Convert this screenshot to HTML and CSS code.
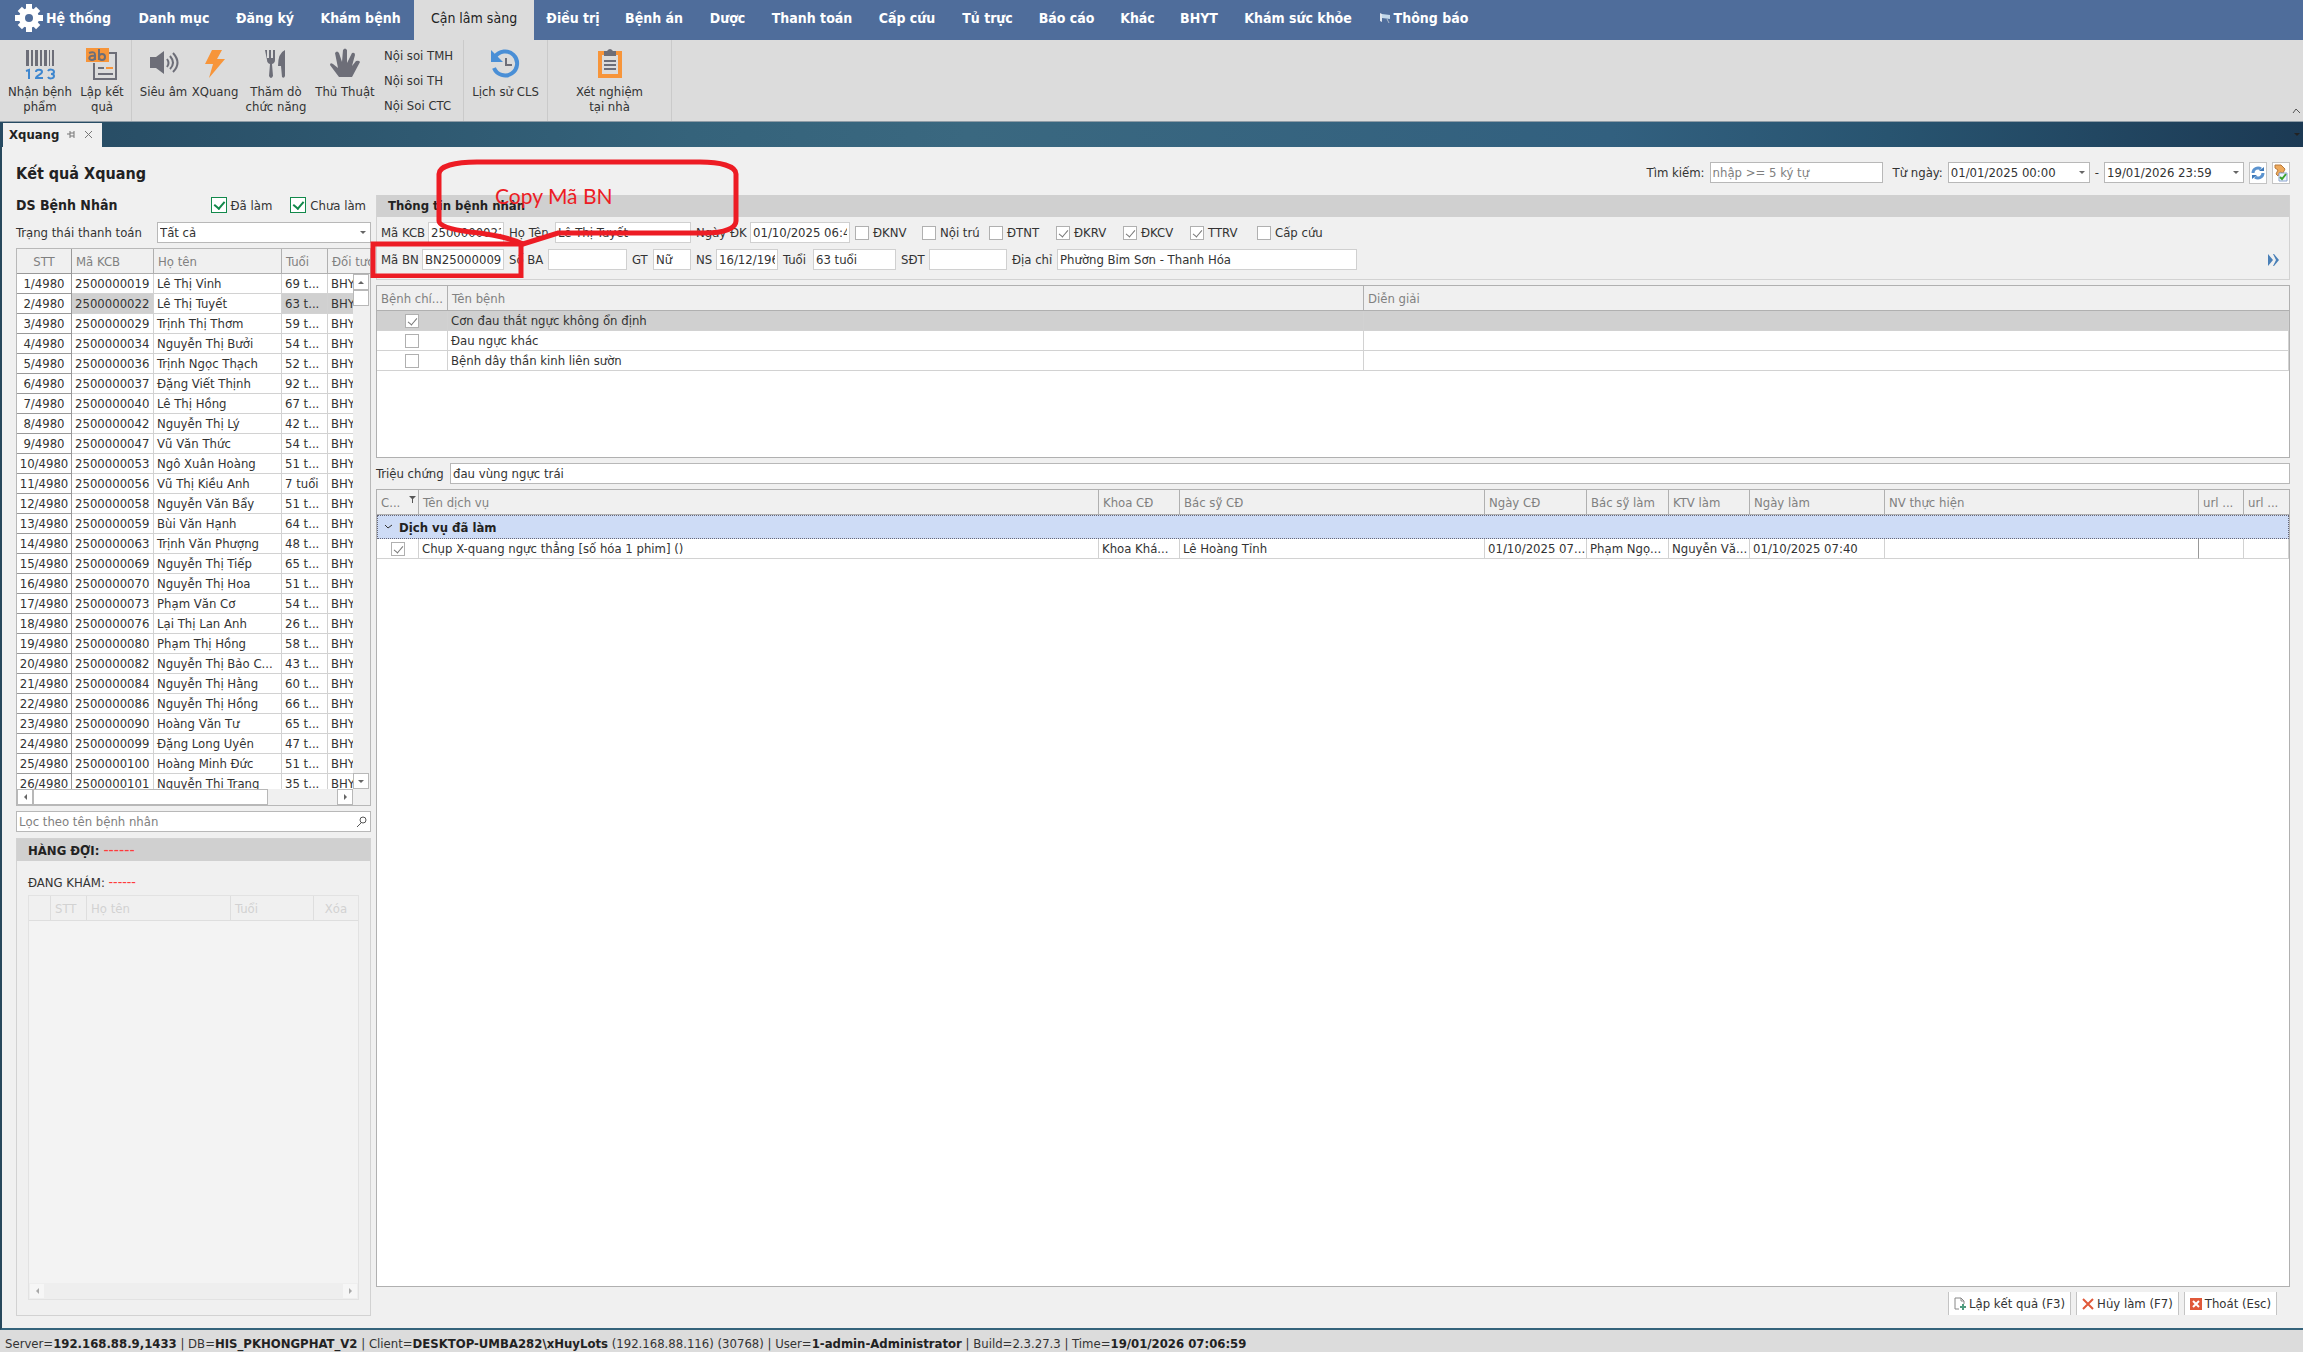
FILE: index.html
```html
<!DOCTYPE html>
<html lang="vi">
<head>
<meta charset="utf-8">
<title>Kết quả Xquang</title>
<link rel="stylesheet" href="styles.css">
</head>
<body>
<nav class="menu">
  <a href="#" class="home"><svg width="30" height="30" viewBox="0 0 30 30"><g fill="#fff"><circle cx="15" cy="15" r="10"/><rect x="12" y="1" width="6" height="28"/><rect x="1" y="12" width="28" height="6"/><rect x="12" y="2" width="6" height="26" transform="rotate(45 15 15)"/><rect x="12" y="2" width="6" height="26" transform="rotate(-45 15 15)"/></g><circle cx="15" cy="15" r="4" fill="#4f6d9b"/></svg>Hệ thống</a>
  <a href="#">Danh mục</a>
  <a href="#">Đăng ký</a>
  <a href="#">Khám bệnh</a>
  <a href="#" class="active">Cận lâm sàng</a>
  <a href="#">Điều trị</a>
  <a href="#">Bệnh án</a>
  <a href="#">Dược</a>
  <a href="#">Thanh toán</a>
  <a href="#">Cấp cứu</a>
  <a href="#">Tủ trực</a>
  <a href="#">Báo cáo</a>
  <a href="#">Khác</a>
  <a href="#">BHYT</a>
  <a href="#">Khám sức khỏe</a>
  <a href="#"><svg width="13" height="13" viewBox="0 0 13 13"><path d="M1 1l2 1v8l-2-1z" fill="#dfe6ee"/><path d="M3 2l8 1v4L3 6z" fill="#c3d8ea"/><path d="M8 7l2 4" stroke="#aab8c8"/></svg>Thông báo</a>
</nav>

<header class="ribbon">
  <div class="group g1">
    <button><svg width="30" height="32" viewBox="0 0 30 32"><path d="M1 2h3v16H1zM6 2h2v16H6zM10 2h3v16h-3zM15 2h2v16h-2zM19 2h3v16h-3zM24 2h1v16h-1zM27 2h2v16h-2z" fill="#6d6e78"/><g fill="none" stroke="#3f87cf" stroke-width="2"><path d="M1 23l3-1v9M11 24c0-3 6-3 6 0 0 2-6 4-6 6h7M23 23c1-2 6-2 6 1 0 1-1 2-3 2 2 0 3 1 3 2 0 3-5 3-6 1"/></g></svg><span>Nhận bệnh<br>phẩm</span></button>
    <button><svg width="34" height="34" viewBox="0 0 34 34"><path d="M24 6h7v26H9V16" fill="none" stroke="#6d6e78" stroke-width="2"/><path d="M1 1h23v14H1z" fill="#f7953a"/><g fill="none" stroke="#6d6e78" stroke-width="2"><path d="M4 6c5-2 6 0 6 2v5M10 9c-7-1-7 4-3 4 2 0 3-1 3-3M14 2v11"/><circle cx="17" cy="10" r="3"/></g><path d="M13 21h6M13 27h15" stroke="#6d6e78" stroke-width="2"/><path d="M21 21h7" stroke="#f7953a" stroke-width="2"/></svg><span>Lập kết<br>quả</span></button>
  </div>
  <div class="group g2">
    <button><svg width="30" height="32" viewBox="0 0 30 32"><path d="M1 9h6l8-6v23l-8-6H1z" fill="#6d6e78"/><g fill="none" stroke="#6d6e78" stroke-width="2"><path d="M18 11q3 4 0 8M21 8q6 7 0 13M24 5q9 10 0 19"/></g></svg><span>Siêu âm</span></button>
    <button><svg width="22" height="32" viewBox="0 0 22 32"><path d="M8 2h10l-5 9h8L5 30l4-14H1z" fill="#f7953a"/></svg><span>XQuang</span></button>
    <button><svg width="24" height="32" viewBox="0 0 24 32"><path d="M1 2h2v8h2V2h2v8h2V2h2v10q0 3-3 4l1 12q-2 4-4 0l1-12q-3-1-3-4zM21 2v26q-1 3-3 1l-1-11h-3q0-13 7-16z" fill="#6d6e78"/></svg><span>Thăm dò<br>chức năng</span></button>
    <button><svg width="32" height="32" viewBox="0 0 32 32"><path d="M10 29l-9-12q0-3 3-1l5 4L6 5q2-3 4 0l3 9 1-12q2-3 4 0v13l5-10q3-1 3 2l-3 11 4-5q3-1 4 1l-8 15z" fill="#6d6e78"/></svg><span>Thủ Thuật</span></button>
    <div class="links"><a href="#">Nội soi TMH</a><a href="#">Nội soi TH</a><a href="#">Nội Soi CTC</a></div>
  </div>
  <div class="group g3">
    <button><svg width="32" height="32" viewBox="0 0 32 32"><path d="M5 9a12 12 0 1 1-1 11" fill="none" stroke="#4a8fd6" stroke-width="4"/><path d="M1 2v12h12z" fill="#4a8fd6"/><path d="M16 10v7h6" fill="none" stroke="#6d6e78" stroke-width="2"/></svg><span>Lịch sử CLS</span></button>
  </div>
  <div class="group g4">
    <button><svg width="26" height="32" viewBox="0 0 26 32"><path d="M3 5h20v23H3z" fill="none" stroke="#f7953a" stroke-width="4"/><path d="M7 3h3q3-4 6 0h3v5H7z" fill="#6d6e78"/><path d="M7 13h12M7 17h12M7 21h12" stroke="#6d6e78" stroke-width="2"/></svg><span>Xét nghiệm<br>tại nhà</span></button>
  </div>
  <svg class="collapse" width="9" height="6" viewBox="0 0 9 6"><path d="M1 5l3-4 4 4" fill="none" stroke="#555"/></svg>
</header>

<div class="tabs">
  <div class="tab">Xquang
    <svg width="9" height="9" viewBox="0 0 9 9"><path d="M0 4h3M3 1v7M3 3h4M3 6h4M7 1v7" stroke="#777" fill="none"/></svg>
    <svg width="9" height="9" viewBox="0 0 9 9"><path d="M1 1l7 7M8 1l-7 7" stroke="#777" fill="none"/></svg>
  </div>
  <span class="arrow"></span>
</div>

<main class="page">
  <div class="topbar">
    <h1>Kết quả Xquang</h1>
    <div class="search">
      <label for="q">Tìm kiếm:</label><input id="q" class="q" placeholder="nhập &gt;= 5 ký tự">
      <label for="d1" class="from">Từ ngày:</label><span class="drop d1"><input id="d1" value="01/01/2025 00:00"></span>
      <span>-</span><span class="drop d2"><input aria-label="Đến ngày" value="19/01/2026 23:59"></span>
      <button aria-label="Làm mới"><svg width="14" height="14" viewBox="0 0 14 14"><g fill="none" stroke="#5b93cf" stroke-width="3"><path d="M2 7a5 5 0 0 1 8-4M12 7a5 5 0 0 1-8 4"/></g><path d="M8 5h5V1zM6 9H1v4z" fill="#3d78b8"/></svg></button>
      <button aria-label="Chọn"><svg width="14" height="18" viewBox="0 0 14 18"><path d="M1 1l6 0 4 4-2 4-3-1-2 4-2-2 2-4-3-2z" fill="#eda95c" stroke="#b97a3a"/><path d="M5 9h8v8H5z" fill="#eef4ff" stroke="#8ba4cf"/><path d="M6 13l2 2 4-5" fill="none" stroke="#3aa32e" stroke-width="2"/></svg></button>
    </div>
  </div>

  <div class="columns">
    <aside>
      <div class="aside-head">
        <h2>DS Bệnh Nhân</h2>
        <label class="green"><input type="checkbox" checked>Đã làm</label>
        <label class="green"><input type="checkbox" checked>Chưa làm</label>
      </div>
      <div class="status-row"><label for="pay">Trạng thái thanh toán</label><span class="drop"><select id="pay"><option>Tất cả</option></select></span></div>

      <div class="list">
        <div class="list-body">
          <table class="patients">
            <colgroup><col class="w55"><col class="w82"><col class="w128"><col class="w46"><col></colgroup>
            <thead><tr><th>STT</th><th>Mã KCB</th><th>Họ tên</th><th>Tuổi</th><th>Đối tượng</th></tr></thead>
            <tbody>
            <tr><td>1/4980</td><td>2500000019</td><td>Lê Thị Vinh</td><td>69 t...</td><td>BHYT</td></tr>
            <tr class="sel"><td>2/4980</td><td>2500000022</td><td>Lê Thị Tuyết</td><td>63 t...</td><td>BHYT</td></tr>
            <tr><td>3/4980</td><td>2500000029</td><td>Trịnh Thị Thơm</td><td>59 t...</td><td>BHYT</td></tr>
            <tr><td>4/4980</td><td>2500000034</td><td>Nguyễn Thị Bưởi</td><td>54 t...</td><td>BHYT</td></tr>
            <tr><td>5/4980</td><td>2500000036</td><td>Trịnh Ngọc Thạch</td><td>52 t...</td><td>BHYT</td></tr>
            <tr><td>6/4980</td><td>2500000037</td><td>Đặng Viết Thịnh</td><td>92 t...</td><td>BHYT</td></tr>
            <tr><td>7/4980</td><td>2500000040</td><td>Lê Thị Hồng</td><td>67 t...</td><td>BHYT</td></tr>
            <tr><td>8/4980</td><td>2500000042</td><td>Nguyễn Thị Lý</td><td>42 t...</td><td>BHYT</td></tr>
            <tr><td>9/4980</td><td>2500000047</td><td>Vũ Văn Thức</td><td>54 t...</td><td>BHYT</td></tr>
            <tr><td>10/4980</td><td>2500000053</td><td>Ngô Xuân Hoàng</td><td>51 t...</td><td>BHYT</td></tr>
            <tr><td>11/4980</td><td>2500000056</td><td>Vũ Thị Kiều Anh</td><td>7 tuổi</td><td>BHYT</td></tr>
            <tr><td>12/4980</td><td>2500000058</td><td>Nguyễn Văn Bẩy</td><td>51 t...</td><td>BHYT</td></tr>
            <tr><td>13/4980</td><td>2500000059</td><td>Bùi Văn Hạnh</td><td>64 t...</td><td>BHYT</td></tr>
            <tr><td>14/4980</td><td>2500000063</td><td>Trịnh Văn Phượng</td><td>48 t...</td><td>BHYT</td></tr>
            <tr><td>15/4980</td><td>2500000069</td><td>Nguyễn Thị Tiếp</td><td>65 t...</td><td>BHYT</td></tr>
            <tr><td>16/4980</td><td>2500000070</td><td>Nguyễn Thị Hoa</td><td>51 t...</td><td>BHYT</td></tr>
            <tr><td>17/4980</td><td>2500000073</td><td>Phạm Văn Cơ</td><td>54 t...</td><td>BHYT</td></tr>
            <tr><td>18/4980</td><td>2500000076</td><td>Lại Thị Lan Anh</td><td>26 t...</td><td>BHYT</td></tr>
            <tr><td>19/4980</td><td>2500000080</td><td>Phạm Thị Hồng</td><td>58 t...</td><td>BHYT</td></tr>
            <tr><td>20/4980</td><td>2500000082</td><td>Nguyễn Thị Bảo C...</td><td>43 t...</td><td>BHYT</td></tr>
            <tr><td>21/4980</td><td>2500000084</td><td>Nguyễn Thị Hằng</td><td>60 t...</td><td>BHYT</td></tr>
            <tr><td>22/4980</td><td>2500000086</td><td>Nguyễn Thị Hồng</td><td>66 t...</td><td>BHYT</td></tr>
            <tr><td>23/4980</td><td>2500000090</td><td>Hoàng Văn Tư</td><td>65 t...</td><td>BHYT</td></tr>
            <tr><td>24/4980</td><td>2500000099</td><td>Đặng Long Uyên</td><td>47 t...</td><td>BHYT</td></tr>
            <tr><td>25/4980</td><td>2500000100</td><td>Hoàng Minh Đức</td><td>51 t...</td><td>BHYT</td></tr>
            <tr><td>26/4980</td><td>2500000101</td><td>Nguyễn Thị Trang</td><td>35 t...</td><td>BHYT</td></tr>
            </tbody>
          </table>
          <div class="vscroll"><i class="sb up"></i><i class="thumb"></i><i class="sb down"></i></div>
        </div>
        <div class="hscroll"><i class="sb left"></i><i class="thumb"></i><i class="sb right"></i></div>
      </div>

      <div class="filter"><input aria-label="Lọc theo tên bệnh nhân" placeholder="Lọc theo tên bệnh nhân"><svg width="12" height="12" viewBox="0 0 12 12"><circle cx="7" cy="4" r="3" fill="none" stroke="#555"/><path d="M5 7l-4 4" stroke="#555"/></svg></div>

      <section class="queue">
        <h3>HÀNG ĐỢI: <em>------</em></h3>
        <div class="queue-body">
          <p>ĐANG KHÁM: <em>------</em></p>
          <div class="queue-grid">
            <table>
              <colgroup><col class="w22"><col class="w36"><col><col class="w83"><col class="w44"></colgroup>
              <thead><tr><th></th><th>STT</th><th>Họ tên</th><th>Tuổi</th><th>Xóa</th></tr></thead>
            </table>
            <div class="qscroll"><i class="sb left"></i><i class="sb right"></i></div>
          </div>
        </div>
      </section>
    </aside>

    <div class="content">
      <section class="info">
        <h3>Thông tin bệnh nhân</h3>
        <div class="info-body">
          <div class="r1">
            <label for="f1">Mã KCB</label><input id="f1" value="2500000022">
            <label for="f2">Họ Tên</label><input id="f2" value="Lê Thị Tuyết">
            <label for="f3">Ngày ĐK</label><input id="f3" value="01/10/2025 06:41">
            <label class="ck"><input type="checkbox">ĐKNV</label>
            <label class="ck"><input type="checkbox">Nội trú</label>
            <label class="ck"><input type="checkbox">ĐTNT</label>
            <label class="ck"><input type="checkbox" checked>ĐKRV</label>
            <label class="ck"><input type="checkbox" checked>ĐKCV</label>
            <label class="ck"><input type="checkbox" checked>TTRV</label>
            <label class="ck"><input type="checkbox">Cấp cứu</label>
          </div>
          <div class="r2">
            <label for="f4">Mã BN</label><input id="f4" value="BN25000009">
            <label for="f5">Số BA</label><input id="f5">
            <label for="f6">GT</label><input id="f6" value="Nữ">
            <label for="f7">NS</label><input id="f7" value="16/12/1962">
            <label for="f8">Tuổi</label><input id="f8" value="63 tuổi">
            <label for="f9">SĐT</label><input id="f9">
            <label for="f10">Địa chỉ</label><input id="f10" value="Phường Bỉm Sơn - Thanh Hóa">
            <svg class="more" width="11" height="12" viewBox="0 0 11 12"><path d="M0 0l5 6-5 6zM5 0h1l5 6-5 6H5l3-6z" fill="#4a80b8"/></svg>
          </div>
        </div>
      </section>

      <div class="grid diseases">
        <table>
          <colgroup><col class="w71"><col><col class="w925"></colgroup>
          <thead><tr><th>Bệnh chí...</th><th>Tên bệnh</th><th>Diễn giải</th></tr></thead>
          <tbody>
            <tr class="sel"><td><input type="checkbox" aria-label="Bệnh chính" checked></td><td>Cơn đau thắt ngực không ổn định</td><td></td></tr>
            <tr><td><input type="checkbox" aria-label="Bệnh chính"></td><td>Đau ngực khác</td><td></td></tr>
            <tr><td><input type="checkbox" aria-label="Bệnh chính"></td><td>Bệnh dây thần kinh liên sườn</td><td></td></tr>
          </tbody>
        </table>
      </div>

      <div class="symptom"><label for="sy">Triệu chứng</label><input id="sy" value="đau vùng ngực trái"></div>

      <div class="grid services">
        <table>
          <colgroup><col class="w42"><col><col class="w81"><col class="w305"><col class="w102"><col class="w82"><col class="w81"><col class="w135"><col class="w314"><col class="w45"><col class="w45"></colgroup>
          <thead><tr><th class="filtered">C...<svg width="7" height="7" viewBox="0 0 7 7"><path d="M0 0h7L4 3v4H3V3z" fill="#555"/></svg></th><th>Tên dịch vụ</th><th>Khoa CĐ</th><th>Bác sỹ CĐ</th><th>Ngày CĐ</th><th>Bác sỹ làm</th><th>KTV làm</th><th>Ngày làm</th><th>NV thực hiện</th><th>url ...</th><th>url ...</th></tr></thead>
          <tbody>
            <tr class="band"><td colspan="11"><svg width="9" height="6" viewBox="0 0 9 6"><path d="M1 1l3 3 4-3" fill="none" stroke="#333"/></svg>Dịch vụ đã làm</td></tr>
            <tr><td><input type="checkbox" aria-label="Chọn" checked></td><td>Chụp X-quang ngực thẳng [số hóa 1 phim] ()</td><td>Khoa Khá...</td><td>Lê Hoàng Tỉnh</td><td>01/10/2025 07...</td><td>Phạm Ngọ...</td><td>Nguyễn Vă...</td><td>01/10/2025 07:40</td><td class="edge"></td><td></td><td></td></tr>
          </tbody>
        </table>
      </div>

      <div class="actions">
        <button><svg width="12" height="13" viewBox="0 0 12 13"><path d="M5 12H1V1h6l3 3v3M7 1v3h3" fill="none" stroke="#888"/><path d="M9 7v6M6 10h6" stroke="#4f9b7f" stroke-width="2"/></svg>Lập kết quả (F3)</button>
        <button><svg width="12" height="12" viewBox="0 0 12 12"><path d="M1 1l10 10M11 1L1 11" stroke="#e0593a" stroke-width="2"/></svg>Hủy làm (F7)</button>
        <button><svg width="12" height="12" viewBox="0 0 12 12"><path d="M0 0h12v12H0z" fill="#e0593a"/><path d="M3 3l6 6M9 3L3 9" stroke="#fff" stroke-width="2"/></svg>Thoát (Esc)</button>
      </div>

      <div class="note">
        <svg width="372" height="124" viewBox="0 0 372 124"><g fill="none" stroke="#ed1c24" stroke-width="5"><path d="M107 8H330C350 8 366 12 366 20V67C366 74 355 79 335 79H188L153 90C140 84 120 80 100 78Q69 74 69 67V20C69 12 85 8 107 8Z"/><path d="M3 90h148v32H3z"/></g></svg>
        <span>Copy Mã BN</span>
      </div>
    </div>
  </div>
</main>

<footer>Server=<b>192.168.88.9,1433</b> | DB=<b>HIS_PKHONGPHAT_V2</b> | Client=<b>DESKTOP-UMBA282\xHuyLots</b> (192.168.88.116) (30768) | User=<b>1-admin-Administrator</b> | Build=2.3.27.3 | Time=<b>19/01/2026 07:06:59</b></footer>
</body>
</html>
```
FILE: styles.css
```css
* { box-sizing: border-box; }
body { margin: 0; min-height: 100vh; display: flex; flex-direction: column; background: #f0f0f0; color: #333; font: 13px/15px "DejaVu Sans Condensed", "Noto Sans", sans-serif; }
h1, h2, h3, p { margin: 0; }
a { color: inherit; text-decoration: none; }
button, input, select { font: inherit; color: inherit; }
label { white-space: nowrap; }
em { font-style: normal; font-weight: 400; font-size: 14px; color: #ff3b3b; }
svg { flex: none; }

.menu { display: grid; grid-template-columns: 125px 98px 84px 107px 120px 78px 84px 63px 106px 84px 77px 81px 61px 62px 136px 115px; height: 40px; background: #4f6d9b; color: #fff; font-size: 14px; font-weight: 700; }
.menu a { display: flex; align-items: center; justify-content: center; gap: 2px; padding-bottom: 4px; white-space: nowrap; }
.menu .active { background: #dcdcdc; color: #222; font-weight: 400; }

.ribbon { display: flex; height: 82px; background: #dcdcdc; border-bottom: 1px solid #8f9ca6; }
.group { display: grid; border-right: 1px solid #cacaca; padding-top: 7px; }
.g1 { grid-template-columns: 72px 52px; padding-left: 4px; width: 132px; }
.g2 { grid-template-columns: 51px 52px 70px 68px 84px; padding-left: 6px; width: 332px; }
.g3 { width: 84px; }
.g4 { width: 124px; }
.ribbon button { display: flex; flex-direction: column; align-items: center; gap: 3px; padding: 0; border: 0; background: none; white-space: nowrap; }
.ribbon button svg { height: 34px; }
.links { display: flex; flex-direction: column; gap: 10px; padding: 1px 0 0 5px; white-space: nowrap; }
.collapse { margin: auto 2px 7px auto; }

.tabs { display: flex; justify-content: space-between; align-items: center; height: 25px; padding-left: 3px; background: linear-gradient(90deg, #264a62, #35637b 30%, #3a6880 42%, #32607f 70%, #285470 82%, #1c3a54); }
.tab { display: flex; align-items: center; gap: 8px; height: 24px; width: 99px; padding-left: 6px; background: #f0f0f0; color: #222; font-weight: 700; }
.arrow, .drop::after { border: 3px solid transparent; border-top-color: #666; border-bottom: 0; }
.arrow { border-top-color: #222; margin-right: 3px; }

.page { flex: 1; display: flex; flex-direction: column; padding: 14px 13px 0 14px; border-left: 2px solid #27485c; border-bottom: 2px solid #35637b; }
.topbar { display: flex; justify-content: space-between; height: 34px; }
h1 { font-size: 16px; line-height: 26px; color: #222; }
.search { display: flex; align-items: center; gap: 5px; height: 23px; }
.search button { display: flex; align-items: center; justify-content: center; width: 18px; height: 22px; padding: 0; border: 1px solid #c4c4c4; background: #fff; }
input:not([type]), select { height: 21px; min-width: 0; width: 100%; padding: 0 2px; border: 1px solid #d0d0d0; background: #fff; border-radius: 0; outline: 0; }
input::placeholder { color: #808080; opacity: 1; }
.search .q { width: 173px; border-color: #b8b8b8; }
.from { margin-left: 5px; }
.drop { position: relative; }
.drop input, .drop select { display: block; border-color: #b8b8b8; appearance: none; }
.drop::after { content: ""; position: absolute; right: 5px; top: 9px; }
.d1 { width: 142px; }
.d2 { width: 140px; }

.columns { flex: 1; display: flex; gap: 5px; }
aside { width: 355px; flex: none; display: flex; flex-direction: column; gap: 5px; padding-bottom: 12px; }
.aside-head { display: flex; height: 22px; align-items: center; gap: 18px; padding: 0 5px 2px 0; }
h2 { flex: 1; font-size: 14px; line-height: 22px; color: #222; }
.green { display: flex; align-items: center; gap: 4px; }

input[type=checkbox] { appearance: none; position: relative; flex: none; width: 14px; height: 14px; margin: 0; border: 1px solid #b0b0b0; background: #fff; }
input[type=checkbox]:checked::after { content: ""; position: absolute; left: 4px; top: 1px; width: 4px; height: 8px; border: solid #777; border-width: 0 1px 1px 0; transform: rotate(40deg); }
.green input[type=checkbox] { width: 16px; height: 16px; border-color: #12894b; }
.green input[type=checkbox]:checked::after { border-color: #12894b; border-width: 0 2px 2px 0; width: 5px; }

.status-row { display: grid; grid-template-columns: 141px 1fr; align-items: center; height: 21px; }

table { width: 100%; table-layout: fixed; border-collapse: separate; border-spacing: 0; }
th, td { height: 20px; padding: 0 2px 0 3px; border: solid #d2d2d2; border-width: 0 1px 1px 0; text-align: left; overflow: hidden; white-space: nowrap; line-height: 15px; }
th { height: 25px; padding-left: 4px; font-weight: 400; color: #808080; background: #f0f0f0; border-color: #b0b0b0; }
td { background: #fff; }
.sel td { background: #d0d0d0; }
th:last-child { border-right: 0; }

.list { height: 558px; border: 1px solid #b8b8b8; background: #f0f0f0; display: flex; flex-direction: column; }
.list-body { position: relative; height: 540px; overflow: hidden; }
.patients th:first-child, .patients td:first-child { text-align: center; padding: 0; border-color: #999; }
.patients .sel td:first-child, .patients .sel td:nth-child(3) { background: #fff; }
.vscroll { position: absolute; right: 0; top: 25px; bottom: 0; width: 17px; background: #f0f0f0; display: flex; flex-direction: column; }
.sb, .thumb { display: flex; flex: none; align-items: center; justify-content: center; width: 16px; height: 16px; border: 1px solid #b8b8b8; background: #fff; }
.sb::after { content: ""; border: 3px solid transparent; }
.up::after { border-bottom-color: #666; border-top: 0; }
.down::after { border-top-color: #666; border-bottom: 0; }
.left::after { border-right-color: #666; border-left: 0; }
.right::after { border-left-color: #666; border-right: 0; }
.vscroll .down { margin-top: auto; }
.hscroll { display: flex; padding-right: 17px; }
.hscroll .thumb { width: 235px; }
.hscroll .right { margin-left: auto; }

.filter { display: flex; align-items: center; height: 21px; padding-right: 2px; border: 1px solid #b8b8b8; background: #fff; }
.filter input { height: 19px; border: 0; }

h3 { height: 22px; font-size: 13px; line-height: 22px; padding-left: 11px; background: #d0d0d0; color: #222; }
h3 em { font-size: 16px; }
.queue { flex: 1; display: flex; flex-direction: column; margin-top: 1px; border: 1px solid #d2d2d2; }
.queue-body { flex: 1; display: flex; flex-direction: column; padding: 14px 11px 15px; }
.queue-body p { height: 20px; }
.queue-grid { flex: 1; display: flex; flex-direction: column; justify-content: space-between; border: 1px solid #e2e2e2; background: #f3f3f3; }
.queue-grid th { border-color: #dedede; color: #d2d2d2; }
.queue-grid th:last-child { text-align: center; padding: 0; }
.qscroll { display: flex; justify-content: space-between; background: #eee; }
.qscroll .sb { border-color: #eee; opacity: .5; }

.content { position: relative; flex: 1; min-width: 0; display: flex; flex-direction: column; gap: 5px; }
.info { border: 1px solid #d2d2d2; border-top: 0; height: 85px; }
.info-body { display: grid; gap: 6px; padding: 5px 10px 0 4px; }
.r1, .r2 { display: grid; align-items: center; column-gap: 5px; height: 21px; }
.r1 { grid-template-columns: 42px 76px 41px 136px 49px 100px repeat(7, 62px); }
.r2 { grid-template-columns: 36px 82px 34px 79px 16px 38px 15px 62px 25px 83px 23px 78px 40px 300px 1fr; }
.more { justify-self: end; }
.ck { display: flex; align-items: center; gap: 4px; }

.grid { border: 1px solid #b0b0b0; background: #fff; }
.diseases { height: 173px; }
.grid td:first-child { text-align: center; padding: 0; }
.grid td input { display: block; margin: auto; }
.symptom { display: grid; grid-template-columns: 74px 1fr; align-items: center; }
.symptom input:not([type]) { border-color: #b8b8b8; }
.services { flex: 1; }
.filtered svg { float: right; margin-top: 1px; }
.grid .band td { height: 24px; padding-left: 6px; background: #cedcf6; border: 1px dotted #667; text-align: left; font-weight: 700; color: #222; }
.band svg { margin: 0 6px 2px 0; vertical-align: middle; }
.grid .edge { border-right-color: #999; }

.actions { display: flex; justify-content: flex-end; gap: 5px; padding-right: 13px; margin-bottom: 13px; }
.actions button { display: flex; align-items: center; gap: 3px; height: 23px; padding: 0 5px; border: solid #c4c4c4; border-width: 0 1px; background: #fff; white-space: nowrap; }

.note { position: absolute; left: -6px; top: -41px; color: #ed1c24; pointer-events: none; }
.note svg { display: block; }
.note span { position: absolute; left: 125px; top: 30px; font: 21px/24px Lato, sans-serif; white-space: nowrap; }

footer { height: 22px; padding-left: 5px; background: #dcdcdc; line-height: 28px; white-space: nowrap; overflow: hidden; }
footer b { color: #222; }

.w22 { width: 22px; } .w36 { width: 36px; } .w42 { width: 42px; } .w44 { width: 44px; } .w45 { width: 45px; } .w46 { width: 46px; }
.w55 { width: 55px; } .w71 { width: 71px; } .w81 { width: 81px; } .w82 { width: 82px; } .w83 { width: 83px; } .w102 { width: 102px; }
.w128 { width: 128px; } .w135 { width: 135px; } .w305 { width: 305px; } .w314 { width: 314px; } .w925 { width: 925px; }
```
